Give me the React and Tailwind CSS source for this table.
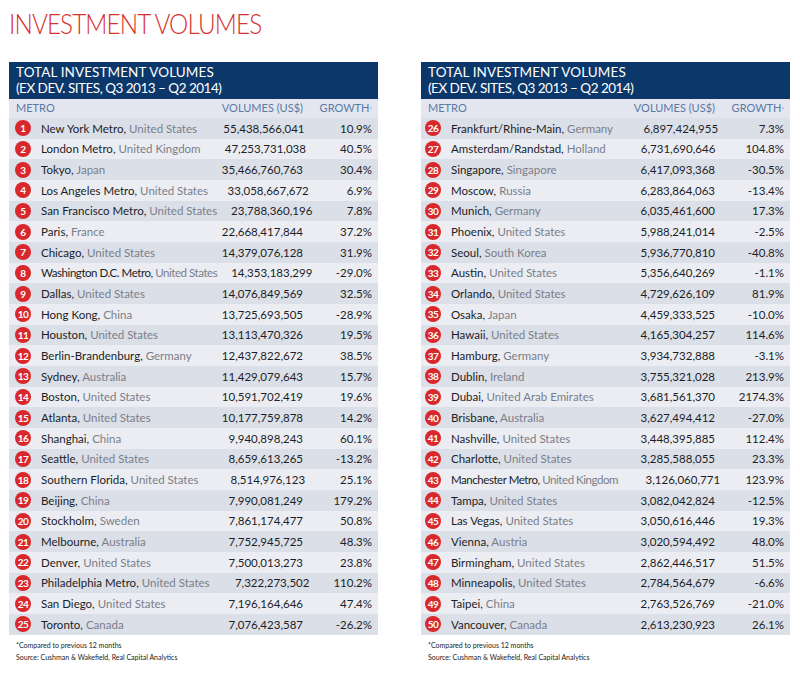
import React from "react";

const left = [
  ["New York Metro", "United States", "55,438,566,041", "10.9%"],
  ["London Metro", "United Kingdom", "47,253,731,038", "40.5%"],
  ["Tokyo", "Japan", "35,466,760,763", "30.4%"],
  ["Los Angeles Metro", "United States", "33,058,667,672", "6.9%"],
  ["San Francisco Metro", "United States", "23,788,360,196", "7.8%"],
  ["Paris", "France", "22,668,417,844", "37.2%"],
  ["Chicago", "United States", "14,379,076,128", "31.9%"],
  ["Washington D.C. Metro", "United States", "14,353,183,299", "-29.0%", true],
  ["Dallas", "United States", "14,076,849,569", "32.5%"],
  ["Hong Kong", "China", "13,725,693,505", "-28.9%"],
  ["Houston", "United States", "13,113,470,326", "19.5%"],
  ["Berlin-Brandenburg", "Germany", "12,437,822,672", "38.5%"],
  ["Sydney", "Australia", "11,429,079,643", "15.7%"],
  ["Boston", "United States", "10,591,702,419", "19.6%"],
  ["Atlanta", "United States", "10,177,759,878", "14.2%"],
  ["Shanghai", "China", "9,940,898,243", "60.1%"],
  ["Seattle", "United States", "8,659,613,265", "-13.2%"],
  ["Southern Florida", "United States", "8,514,976,123", "25.1%"],
  ["Beijing", "China", "7,990,081,249", "179.2%"],
  ["Stockholm", "Sweden", "7,861,174,477", "50.8%"],
  ["Melbourne", "Australia", "7,752,945,725", "48.3%"],
  ["Denver", "United States", "7,500,013,273", "23.8%"],
  ["Philadelphia Metro", "United States", "7,322,273,502", "110.2%"],
  ["San Diego", "United States", "7,196,164,646", "47.4%"],
  ["Toronto", "Canada", "7,076,423,587", "-26.2%"],
];

const right = [
  ["Frankfurt/Rhine-Main", "Germany", "6,897,424,955", "7.3%"],
  ["Amsterdam/Randstad", "Holland", "6,731,690,646", "104.8%"],
  ["Singapore", "Singapore", "6,417,093,368", "-30.5%"],
  ["Moscow", "Russia", "6,283,864,063", "-13.4%"],
  ["Munich", "Germany", "6,035,461,600", "17.3%"],
  ["Phoenix", "United States", "5,988,241,014", "-2.5%"],
  ["Seoul", "South Korea", "5,936,770,810", "-40.8%"],
  ["Austin", "United States", "5,356,640,269", "-1.1%"],
  ["Orlando", "United States", "4,729,626,109", "81.9%"],
  ["Osaka", "Japan", "4,459,333,525", "-10.0%"],
  ["Hawaii", "United States", "4,165,304,257", "114.6%"],
  ["Hamburg", "Germany", "3,934,732,888", "-3.1%"],
  ["Dublin", "Ireland", "3,755,321,028", "213.9%"],
  ["Dubai", "United Arab Emirates", "3,681,561,370", "2174.3%"],
  ["Brisbane", "Australia", "3,627,494,412", "-27.0%"],
  ["Nashville", "United States", "3,448,395,885", "112.4%"],
  ["Charlotte", "United States", "3,285,588,055", "23.3%"],
  ["Manchester Metro", "United Kingdom", "3,126,060,771", "123.9%", true],
  ["Tampa", "United States", "3,082,042,824", "-12.5%"],
  ["Las Vegas", "United States", "3,050,616,446", "19.3%"],
  ["Vienna", "Austria", "3,020,594,492", "48.0%"],
  ["Birmingham", "United States", "2,862,446,517", "51.5%"],
  ["Minneapolis", "United States", "2,784,564,679", "-6.6%"],
  ["Taipei", "China", "2,763,526,769", "-21.0%"],
  ["Vancouver", "Canada", "2,613,230,923", "26.1%"],
];

function Table({ rows, start, circlePad }) {
  return (
    <div className="w-[369px]">
      <div className="bg-[#0c376a] h-[37px] pl-[7px] pt-[3px] text-white text-[13.5px] leading-[15.5px] uppercase">
        <div className="tracking-[0.1px]">Total Investment Volumes</div>
        <div className="tracking-[-0.5px]">(Ex Dev. Sites, Q3 2013 – Q2 2014)</div>
      </div>
      <div className="bg-[#e3e6ee] h-[19px] flex items-center text-[#5a79a6] text-[11px] uppercase pr-[6px]">
        <div className="flex-1 pl-[7px]">Metro</div>
        <div className="w-[110px] text-right">Volumes (US$)</div>
        <div className="w-[69px] text-right">
          Growth<sup className="text-[6px] relative -top-[1px]">*</sup>
        </div>
      </div>
      {rows.map((r, i) => (
        <div
          key={i}
          className={`h-[20.68px] flex items-center pr-[6px] text-[11.5px] ${
            i % 2 === 0 ? "bg-[#dbdfe8]" : "bg-[#ebedf3]"
          }`}
        >
          <div className={`flex-1 flex items-center ${circlePad}`}>
            <div className="w-[16px] h-[16px] rounded-full bg-[#d8282c] text-white text-[10px] font-bold flex items-center justify-center leading-none tracking-[-0.5px]">
              {start + i}
            </div>
            <div
              className={`ml-[10px] whitespace-nowrap ${
                r[4] ? "tracking-[-0.45px]" : ""
              }`}
            >
              <span className="text-[#1c1d26]">{r[0]},</span>{" "}
              <span className="text-[#7a7e88]">{r[1]}</span>
            </div>
          </div>
          <div className="w-[110px] text-right text-[#1c1d26]">{r[2]}</div>
          <div className="w-[69px] text-right text-[#1c1d26]">{r[3]}</div>
        </div>
      ))}
      <div className="pl-[7px] pt-[4px] text-[7px] leading-[12.5px] text-[#222]">
        <div>*Compared to previous 12 months</div>
        <div>Source: Cushman &amp; Wakefield, Real Capital Analytics</div>
      </div>
    </div>
  );
}

export default function App() {
  return (
    <div
      className="w-[800px] h-[682px] bg-white"
      style={{ fontFamily: "Lato, 'Open Sans', sans-serif" }}
    >
      <div className="pl-[9px] pt-[8px] h-[62px]">
        <div className="inline-block origin-left scale-x-[0.9] text-[#d7322e] text-[27px] leading-[32px] font-light tracking-[-1px] whitespace-nowrap">
          INVESTMENT VOLUMES
        </div>
      </div>
      <div className="flex pl-[9px] gap-[43px]">
        <Table rows={left} start={1} circlePad="pl-[6px]" />
        <Table rows={right} start={26} circlePad="pl-[4px]" />
      </div>
    </div>
  );
}
